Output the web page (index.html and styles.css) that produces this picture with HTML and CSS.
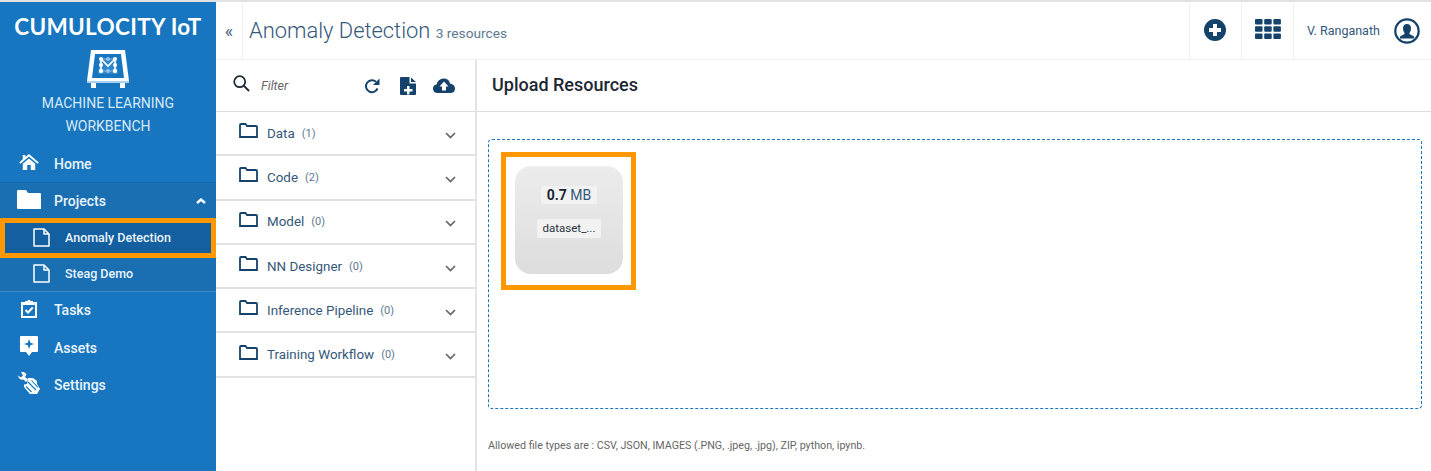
FILE: index.html
```html
<!DOCTYPE html>
<html lang="en">
<head>
    <meta charset="UTF-8">
    <title>Anomaly Detection</title>
    <link rel="stylesheet" href="styles.css">
</head>
<body>
<div class="app">
    <aside class="sidebar">
        <div class="brand">CUMULOCITY IoT</div>
        <svg class="logo" width="42" height="38" viewBox="0 0 42 38">
            <path d="M4 0H38L42 31H0Z" fill="#fff"/>
            <path d="M0 31H42V33H0Z" fill="#a9d2f2"/>
            <path d="M4 33H9V38H4ZM33 33H38V38H33Z" fill="#fff"/>
            <path d="M8 4H34L37 28H5Z" fill="#1776bf"/>
            <path d="M12 8H30L31 24H11Z" fill="#2f86cb"/>
            <path d="M14 19V9L21 16L28 9V19" fill="none" stroke="#fff" stroke-width="1.600"/>
            <path d="M14 21H28M14 9H28" fill="none" stroke="#7db8e8" stroke-width="1"/>
            <circle cx="14" cy="9" r="2" fill="#fff"/>
            <circle cx="28" cy="9" r="2" fill="#fff"/>
            <circle cx="14" cy="15" r="2" fill="#fff"/>
            <circle cx="28" cy="15" r="2" fill="#fff"/>
            <circle cx="14" cy="21" r="2.200" fill="#fff"/>
            <circle cx="28" cy="21" r="2.200" fill="#fff"/>
            <circle cx="21" cy="21" r="2" fill="#8fc3ec"/>
            <circle cx="21" cy="9" r="2" fill="#8fc3ec"/>
        </svg>
        <div class="product">MACHINE LEARNING<br>WORKBENCH</div>
        <nav class="nav">
            <a class="nav-item nav-home">
                <span class="nav-slot"><svg width="20" height="16" viewBox="0 0 22 18"><path d="M11 0L22 9.500L20.600 11L11 2.800L1.400 11L0 9.500L4 6V1H7V3.500ZM4 11L11 5L18 11V18H13V12.500H9V18H4Z" fill="#fff"/></svg></span>
                Home
            </a>
            <div class="nav-group">
                <a class="nav-item nav-projects">
                    <span class="nav-slot"><svg width="24" height="19" viewBox="0 0 24 19"><path d="M1 0H9L11 3H23Q24 3 24 4V19H1Q0 19 0 18V1Q0 0 1 0Z" fill="#fff"/></svg></span>
                    Projects
                    <svg class="nav-caret" width="10" height="6" viewBox="0 0 10 6"><path d="M1 5L5 1.500L9 5" fill="none" stroke="#fff" stroke-width="2.400"/></svg>
                </a>
                <a class="nav-sub nav-sub-active">
                    <svg width="17" height="19" viewBox="0 0 17 19"><path d="M1 1H11L16 6V18H1ZM11 1V6H16" fill="none" stroke="#fff" stroke-width="1.500" stroke-linejoin="round"/></svg>
                    Anomaly Detection
                </a>
                <a class="nav-sub">
                    <svg width="17" height="19" viewBox="0 0 17 19"><path d="M1 1H11L16 6V18H1ZM11 1V6H16" fill="none" stroke="#fff" stroke-width="1.500" stroke-linejoin="round"/></svg>
                    Steag Demo
                </a>
            </div>
            <a class="nav-item">
                <span class="nav-slot"><svg width="18" height="19" viewBox="0 0 18 19"><path d="M1 3H17V19H1ZM3 6V17H15V6Z" fill="#fff" fill-rule="evenodd"/><path d="M5 4V2H7.500Q9 -0.500 10.500 2H13V5H5Z" fill="#fff"/><path d="M5.500 11L8 13.500L12.800 8.500" fill="none" stroke="#fff" stroke-width="2"/></svg></span>
                Tasks
            </a>
            <a class="nav-item">
                <span class="nav-slot"><svg width="18" height="20" viewBox="0 0 18 20"><path fill-rule="evenodd" d="M1 0H17Q18 0 18 1V15Q18 16 17 16H12L9 20L6 16H1Q0 16 0 15V1Q0 0 1 0ZM9 3L10.300 6.700L14 8L10.300 9.300L9 13L7.700 9.300L4 8L7.700 6.700Z" fill="#fff"/></svg></span>
                Assets
            </a>
            <a class="nav-item">
                <span class="nav-slot"><svg width="22" height="22" viewBox="0 0 22 22"><path d="M3 0Q7 -0.500 8.500 2.500L7 5L10 7.500L8 10L5.500 7.500Q1 8.500 0 3.500L3 5.500L5 3.500Z" fill="#fff"/><path d="M10 6L15 6L19 9L19 12L22 17L19 22H12L6 15L6 12.500L9 12Z" fill="#fff"/><path d="M10 10L18 18M13.500 8.500L20 15.500M8 14.500L13.500 20" stroke="#1776bf" stroke-width="1.100"/></svg></span>
                Settings
            </a>
        </nav>
    </aside>
    <div class="content">
        <header class="topbar">
            <button class="collapse">«</button>
            <h1 class="title">Anomaly Detection <small>3 resources</small></h1>
            <div class="top-action">
                <svg class="top-plus" width="22" height="22" viewBox="0 0 22 22"><path fill-rule="evenodd" d="M11 0A11 11 0 1 1 11 22A11 11 0 1 1 11 0ZM9 5V9H5V13H9V17H13V13H17V9H13V5Z" fill="#14426b"/></svg>
            </div>
            <div class="top-action">
                <svg class="top-grid" width="26" height="20" viewBox="0 0 26 20" fill="#14426b"><rect width="7.500" height="5.500" rx="1"/><rect x="9.200" width="7.500" height="5.500" rx="1"/><rect x="18.400" width="7.500" height="5.500" rx="1"/><rect y="7.200" width="7.500" height="5.500" rx="1"/><rect x="9.200" y="7.200" width="7.500" height="5.500" rx="1"/><rect x="18.400" y="7.200" width="7.500" height="5.500" rx="1"/><rect y="14.400" width="7.500" height="5.500" rx="1"/><rect x="9.200" y="14.400" width="7.500" height="5.500" rx="1"/><rect x="18.400" y="14.400" width="7.500" height="5.500" rx="1"/></svg>
            </div>
            <div class="user">
                <span>V. Ranganath</span>
                <svg width="26" height="26" viewBox="0 0 26 26"><circle cx="13" cy="13" r="11.700" fill="none" stroke="#14426b" stroke-width="2.200"/><path d="M13 6Q17 6 17 10.500Q17 13 15.500 15V16L20 18.500V20.500H6V18.500L10.500 16V15Q9 13 9 10.500Q9 6 13 6Z" fill="#14426b"/></svg>
            </div>
        </header>
        <div class="panels">
            <section class="files">
                <div class="filter">
                    <svg class="filter-search" width="17" height="17" viewBox="0 0 17 17"><circle cx="6.700" cy="6.700" r="5.500" fill="none" stroke="#1c2733" stroke-width="1.700"/><path d="M10.700 10.700L16 16" stroke="#1c2733" stroke-width="1.900"/></svg>
                    <span class="filter-text">Filter</span>
                    <svg class="filter-reload" width="16" height="16" viewBox="0 0 16 16"><path d="M13.500 10.500A6 6 0 1 1 12 3.800" fill="none" stroke="#14426b" stroke-width="2"/><path d="M15.500 0.500V7H9Z" fill="#14426b"/></svg>
                    <svg class="filter-new" width="16" height="18" viewBox="0 0 16 18"><path fill-rule="evenodd" d="M1 0H9.500V6.500H16V17Q16 18 15 18H1Q0 18 0 17V1Q0 0 1 0ZM7 9V12H4V14.500H7V17.500H9.500V14.500H12.500V12H9.500V9ZM11 0.500L16 5H11Z" fill="#14426b"/></svg>
                    <svg class="filter-upload" width="22" height="15" viewBox="0 0 22 15"><path fill-rule="evenodd" d="M5 15Q0 15 0 10.500Q0 7 3.500 6.500Q5 1 10.500 0.500Q16 0.500 17 5.500Q22 6.500 22 10.500Q22 15 17 15ZM11 3.500L6.500 8.500H9V12.500H13V8.500H15.500Z" fill="#14426b"/></svg>
                </div>
                <ul class="folders">
                    <li class="folder"><svg width="19" height="15" viewBox="0 0 19 15"><path d="M1 14V2Q1 1 2 1H6.500L8 3H17Q18 3 18 4V14H1Z" fill="none" stroke="#14426b" stroke-width="1.800"/></svg><span class="folder-name">Data</span><span class="count">(1)</span><svg class="chev" width="11" height="7" viewBox="0 0 11 7"><path d="M1 1L5.500 5.500L10 1" fill="none" stroke="#666" stroke-width="1.700"/></svg></li>
                    <li class="folder"><svg width="19" height="15" viewBox="0 0 19 15"><path d="M1 14V2Q1 1 2 1H6.500L8 3H17Q18 3 18 4V14H1Z" fill="none" stroke="#14426b" stroke-width="1.800"/></svg><span class="folder-name">Code</span><span class="count">(2)</span><svg class="chev" width="11" height="7" viewBox="0 0 11 7"><path d="M1 1L5.500 5.500L10 1" fill="none" stroke="#666" stroke-width="1.700"/></svg></li>
                    <li class="folder"><svg width="19" height="15" viewBox="0 0 19 15"><path d="M1 14V2Q1 1 2 1H6.500L8 3H17Q18 3 18 4V14H1Z" fill="none" stroke="#14426b" stroke-width="1.800"/></svg><span class="folder-name">Model</span><span class="count">(0)</span><svg class="chev" width="11" height="7" viewBox="0 0 11 7"><path d="M1 1L5.500 5.500L10 1" fill="none" stroke="#666" stroke-width="1.700"/></svg></li>
                    <li class="folder"><svg width="19" height="15" viewBox="0 0 19 15"><path d="M1 14V2Q1 1 2 1H6.500L8 3H17Q18 3 18 4V14H1Z" fill="none" stroke="#14426b" stroke-width="1.800"/></svg><span class="folder-name">NN Designer</span><span class="count">(0)</span><svg class="chev" width="11" height="7" viewBox="0 0 11 7"><path d="M1 1L5.500 5.500L10 1" fill="none" stroke="#666" stroke-width="1.700"/></svg></li>
                    <li class="folder"><svg width="19" height="15" viewBox="0 0 19 15"><path d="M1 14V2Q1 1 2 1H6.500L8 3H17Q18 3 18 4V14H1Z" fill="none" stroke="#14426b" stroke-width="1.800"/></svg><span class="folder-name">Inference Pipeline</span><span class="count">(0)</span><svg class="chev" width="11" height="7" viewBox="0 0 11 7"><path d="M1 1L5.500 5.500L10 1" fill="none" stroke="#666" stroke-width="1.700"/></svg></li>
                    <li class="folder"><svg width="19" height="15" viewBox="0 0 19 15"><path d="M1 14V2Q1 1 2 1H6.500L8 3H17Q18 3 18 4V14H1Z" fill="none" stroke="#14426b" stroke-width="1.800"/></svg><span class="folder-name">Training Workflow</span><span class="count">(0)</span><svg class="chev" width="11" height="7" viewBox="0 0 11 7"><path d="M1 1L5.500 5.500L10 1" fill="none" stroke="#666" stroke-width="1.700"/></svg></li>
                </ul>
            </section>
            <section class="upload">
                <h2 class="upload-title">Upload Resources</h2>
                <div class="upload-body">
                    <div class="dropzone">
                        <div class="highlight">
                            <div class="file-card">
                                <div class="file-size"><b>0.7</b> MB</div>
                                <div class="file-name">dataset_...</div>
                            </div>
                        </div>
                    </div>
                    <p class="allowed">Allowed file types are : CSV, JSON, IMAGES (.PNG, .jpeg, .jpg), ZIP, python, ipynb.</p>
                </div>
            </section>
        </div>
    </div>
</div>
</body>
</html>
```

FILE: styles.css
```css
* {
    box-sizing: border-box;
}
html, body {
    height: 100%;
}
body {
    margin: 0;
    font-family: Roboto, "Liberation Sans", sans-serif;
    color: #14426b;
    background: #fff;
    overflow: hidden;
}
.app {
    display: flex;
    height: 471px;
    border-top: 2px solid #e2e2e2;
}
.sidebar {
    width: 216px;
    flex: none;
    background: #1776bf;
    color: #fff;
    text-align: center;
}
.brand {
    font-family: Lato, sans-serif;
    font-weight: 700;
    font-size: 22.500px;
    letter-spacing: 0.300px;
    line-height: 26px;
    padding-top: 12px;
    white-space: nowrap;
}
.logo {
    display: block;
    margin: 10px auto 0 87px;
}
.product {
    font-size: 14px;
    line-height: 23px;
    color: #d6e9f8;
    margin-top: 4px;
}
.nav {
    margin-top: 7px;
    text-align: left;
}
.nav-item {
    display: flex;
    align-items: center;
    height: 37.500px;
    padding-left: 17px;
    padding-bottom: 1px;
    font-size: 14px;
    font-weight: 500;
    color: #eaf4fc;
    position: relative;
}
.nav-slot {
    display: flex;
    justify-content: center;
    width: 24px;
    margin-right: 13px;
    margin-bottom: 4px;
}
.nav-slot svg {
    flex: none;
}
.nav-home {
    height: 37px;
    padding-bottom: 0;
}
.nav-group {
    background: #1a6fb3;
    border-top: 1px solid #1569ab;
    border-bottom: 1px solid #3f8ecb;
}
.nav-projects {
    height: 35px;
    padding-bottom: 0;
}
.nav-projects .nav-slot {
    margin-bottom: 2px;
}
.nav-caret {
    position: absolute;
    right: 10px;
    top: 15px;
}
.nav-sub {
    display: flex;
    align-items: center;
    gap: 15px;
    height: 33px;
    padding-left: 33px;
    padding-bottom: 2px;
    font-size: 12.500px;
    font-weight: 500;
    color: #eaf4fc;
}
.nav-sub-active {
    height: 40px;
    padding-left: 28px;
    background: #135f9f;
    border: 5px solid #ff9800;
}
.content {
    flex: 1;
    display: flex;
    flex-direction: column;
    min-width: 0;
}
.topbar {
    display: flex;
    align-items: stretch;
    height: 58px;
    border-bottom: 1px solid #f0f0f0;
}
.collapse {
    width: 27px;
    flex: none;
    border: 0;
    border-right: 1px solid #f0f0f0;
    background: #fff;
    color: #4a6a88;
    font-size: 18px;
    padding: 0;
    font-family: inherit;
}
.title {
    flex: 1;
    margin: 0;
    padding-left: 6px;
    font-size: 21.900px;
    font-weight: 300;
    line-height: 57px;
    color: #34587a;
    white-space: nowrap;
}
.title small {
    font-size: 13.700px;
    font-weight: 400;
    color: #5d7a94;
}
.top-action {
    width: 52px;
    flex: none;
    border-left: 1px solid #f0f0f0;
    display: flex;
    align-items: center;
    justify-content: center;
}
.top-plus {
    margin: 0 2px 2px 0;
}
.top-grid {
    margin-bottom: 4px;
}
.user {
    width: 138px;
    flex: none;
    border-left: 1px solid #f0f0f0;
    display: flex;
    align-items: center;
    padding-left: 13px;
    font-size: 12.500px;
    color: #34587a;
}
.user span {
    width: 87px;
}
.panels {
    flex: 1;
    display: flex;
    min-height: 0;
}
.files {
    width: 261px;
    flex: none;
    border-right: 2px solid #e4e4e4;
}
.filter {
    display: flex;
    align-items: center;
    height: 52px;
    border-bottom: 1px solid #dcdcdc;
}
.filter-search {
    margin-left: 17px;
    margin-top: -4px;
}
.filter-text {
    margin-left: 11px;
    font-size: 12.500px;
    font-style: italic;
    color: #666;
    flex: 1;
}
.filter-reload {
    margin-right: 20px;
}
.filter-new {
    margin-right: 17px;
}
.filter-upload {
    margin-right: 20px;
}
.folders {
    list-style: none;
    margin: 0;
    padding: 0;
}
.folder {
    display: flex;
    align-items: center;
    height: 44.300px;
    padding-left: 23px;
    border-bottom: 2px solid #e2e2e2;
    font-size: 13.400px;
    color: #34587a;
}
.folder > svg:first-child {
    margin-bottom: 5px;
}
.folder-name {
    margin-left: 9px;
    margin-right: 7px;
}
.count {
    font-size: 11px;
    color: #5d7a94;
}
.chev {
    margin-left: auto;
    margin-right: 19px;
    margin-top: 4px;
}
.upload {
    flex: 1;
    min-width: 0;
    display: flex;
    flex-direction: column;
}
.upload-title {
    margin: 0;
    height: 52px;
    padding-left: 15px;
    border-bottom: 1px solid #dcdcdc;
    font-size: 18px;
    font-weight: 500;
    line-height: 49px;
    color: #1c2733;
}
.upload-body {
    flex: 1;
    padding: 27px 9px 0 11px;
}
.dropzone {
    height: 270px;
    border: 1px dashed #1776bf;
    border-radius: 4px;
    padding: 12px;
}
.highlight {
    width: 135px;
    height: 138px;
    border: 5px solid #ff9800;
    padding: 9px;
}
.file-card {
    width: 108px;
    height: 108px;
    border-radius: 16px;
    background: linear-gradient(#ececec, #dddddd);
    display: flex;
    flex-direction: column;
    align-items: center;
    padding-top: 20px;
}
.file-size {
    background: #f2f2f2;
    padding: 0 6px;
    height: 18px;
    line-height: 18px;
    font-size: 14px;
    color: #34587a;
    border-radius: 2px;
}
.file-size b {
    font-weight: 700;
    color: #1c2733;
}
.file-name {
    margin-top: 15px;
    background: #f2f2f2;
    padding: 0 6px;
    height: 19px;
    line-height: 19px;
    font-size: 11.500px;
    color: #2a3440;
    border-radius: 2px;
}
.allowed {
    margin: 30px 0 0;
    font-size: 10.700px;
    color: #666;
}
```
